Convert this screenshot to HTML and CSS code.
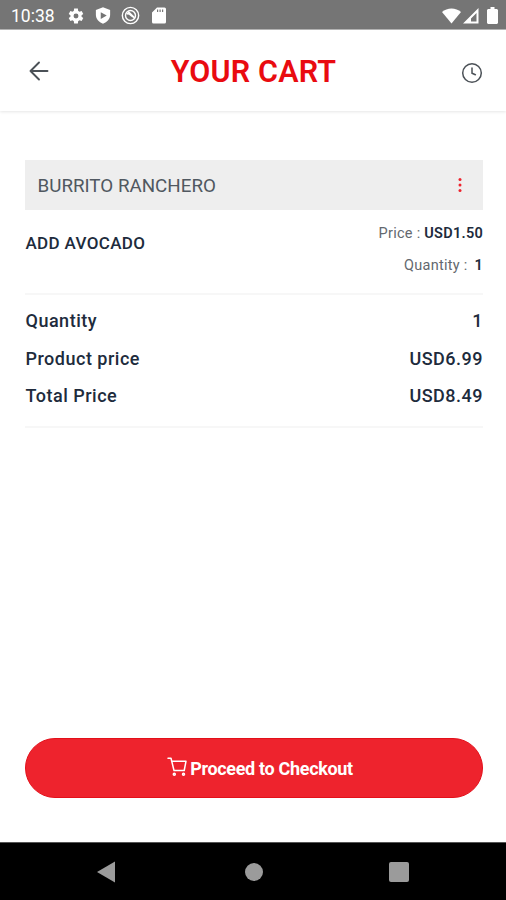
FILE: index.html
```html
<!DOCTYPE html>
<html lang="en">
<head>
<meta charset="utf-8">
<title>Your Cart</title>
<link rel="stylesheet" href="styles.css">
</head>
<body>
<div class="phone">
  <div class="status">
    <span class="time">10:38</span>
    <div class="status-left">
      <svg width="18" height="18" viewBox="0 0 24 24" fill="#fff"><path fill-rule="evenodd" d="M19.4 13a7.500 7.500 0 0 0 0-2l2.300-1.800-2.200-4-2.800 1.100a8 8 0 0 0-1.800-1L14.500 2h-5l-.5 3.300a8 8 0 0 0-1.700 1L4.500 5.200l-2.200 4L4.600 11a7.500 7.500 0 0 0 0 2l-2.300 1.800 2.200 4 2.800-1.100a8 8 0 0 0 1.700 1l.5 3.300h5l.4-3.300a8 8 0 0 0 1.800-1l2.800 1.100 2.200-4zM12 15.300a3.300 3.300 0 1 1 0-6.600 3.300 3.300 0 0 1 0 6.600z"/></svg>
      <svg width="18" height="19" viewBox="0 0 24 24" fill="#fff"><path fill-rule="evenodd" d="M12 1 2.500 4.500V11c0 5.500 4 10 9.500 12 5.500-2 9.500-6.500 9.500-12V4.500zM9 7.500l8 4.500-8 4.500z"/></svg>
      <svg width="19" height="19" viewBox="0 0 24 24" fill="none" stroke="#fff" stroke-width="1.800"><circle cx="12" cy="12" r="10.300"/><circle cx="12" cy="12" r="6.300"/><path d="M7.500 10c4-2 5 4 9 4M9 7l8 8" stroke-width="2.200"/></svg>
      <svg width="14" height="17" viewBox="0 0 14 17" fill="#fff"><path fill-rule="evenodd" d="M5 .5h7.500a1.500 1.500 0 0 1 1.500 1.500v13a1.500 1.500 0 0 1-1.500 1.500h-11A1.500 1.500 0 0 1 0 15V5.500zM5 2.500V5h1.200V2.500zm2.500 0V5h1.200V2.500zm2.500 0V5h1.200V2.500z"/></svg>
    </div>
    <div class="status-right">
      <svg width="19" height="16" viewBox="0 0 19 16" fill="#fff"><path d="M0 4C5-.8 14-.8 19 4L9.500 15.500z"/></svg>
      <svg width="16" height="16" viewBox="0 0 16 16"><path fill="#fff" fill-rule="evenodd" d="M15.500 0v15.500H0zM13.500 5 8 10.500v3h5.500z"/></svg>
      <svg width="11" height="17" viewBox="0 0 11 17" fill="#fff"><path d="M3.500 0h4v2H10l1 1v13l-1 1H1l-1-1V3l1-1h2.500z"/></svg>
    </div>
  </div>
  <header class="header">
    <svg width="20" height="20" viewBox="0 0 20 20" fill="none" stroke="#4b5157" stroke-width="1.900" stroke-linecap="round" stroke-linejoin="round"><path d="M18.500 10H1.500M10 1.500 1.500 10l8.500 8.500"/></svg>
    <h1>YOUR CART</h1>
    <svg class="clock" width="22" height="22" viewBox="0 0 22 22" fill="none" stroke="#4b5157" stroke-width="1.500" stroke-linecap="round"><circle cx="11" cy="11" r="9.300"/><path d="M11 6v5.200l3.400 1.600"/></svg>
  </header>
  <main class="cart">
    <div class="item">
      <span class="item-name">BURRITO RANCHERO</span>
      <svg width="4" height="16" viewBox="0 0 4 16" fill="#ee232d"><circle cx="2" cy="2.500" r="1.500"/><circle cx="2" cy="8" r="1.500"/><circle cx="2" cy="13.500" r="1.500"/></svg>
    </div>
    <div class="extra">
      <span class="extra-name">ADD AVOCADO</span>
      <div class="extra-info">
        <div class="price">Price : <b>USD1.50</b></div>
        <div class="qty">Quantity : <b>1</b></div>
      </div>
    </div>
    <div class="totals">
      <div class="row"><span>Quantity</span><span>1</span></div>
      <div class="row"><span>Product price</span><span>USD6.99</span></div>
      <div class="row"><span>Total Price</span><span>USD8.49</span></div>
    </div>
    <button class="checkout">
      <svg width="20" height="20" viewBox="0 0 20 20" fill="none" stroke="#fff" stroke-width="1.500" stroke-linecap="round" stroke-linejoin="round"><path d="M1 1.200h3l3 12.300h9.800M5 4.200h14l-1.800 9.300"/><circle cx="7.300" cy="17.300" r="1"/><circle cx="16.500" cy="17.300" r="1"/></svg>
      <span>Proceed to Checkout</span>
    </button>
  </main>
  <nav class="nav">
    <svg width="18" height="22" viewBox="0 0 18 22" fill="#9b9b9b"><path d="M18 .5v21L0 11z"/></svg>
    <span class="home"></span>
    <span class="recent"></span>
  </nav>
</div>
</body>
</html>
```

FILE: styles.css
```css
* { box-sizing: border-box; }
body { margin: 0; font-family: Roboto, "Liberation Sans", sans-serif; background: #fff; color: #202b3c; }
svg { display: block; flex: none; }
.phone { width: 506px; height: 900px; display: flex; flex-direction: column; overflow: hidden; }
.status { height: 30px; flex: none; display: flex; align-items: center; background: #757575; border-bottom: 1px solid #b5b5b5; padding: 2px 8px 0 11px; color: #fff; }
.time { width: 56px; font-size: 17.5px; line-height: 20px; white-space: nowrap; }
.status-left { display: flex; align-items: center; gap: 9px; }
.status-left svg:last-child { margin-left: 3px; }
.status-right { display: flex; align-items: center; margin-left: auto; }
.status-right svg:nth-child(2) { margin: 0 8px 0 2px; }
.header { height: 81px; flex: none; display: flex; align-items: center; justify-content: space-between; padding: 1px 23px 0 29px; box-shadow: 0 1px 3px rgba(0,0,0,.1); }
.header > svg:first-child { margin-bottom: 1px; }
.header .clock { margin-top: 4px; }
h1 { margin: 2px 3px 0 0; font-size: 30.5px; line-height: 36px; font-weight: 600; letter-spacing: .2px; color: #e90b10; white-space: nowrap; }
.cart { flex: 1; display: flex; flex-direction: column; padding: 49px 23px 44px 25px; }
.item { height: 50px; display: flex; align-items: center; justify-content: space-between; background: #eee; padding: 0 21px 0 12.5px; }
.item-name { font-size: 18.8px; color: #505860; padding-top: 2px; white-space: nowrap; }
.extra { height: 85px; display: flex; justify-content: space-between; border-bottom: 2px solid #f7f7f7; }
.extra-name { font-size: 17px; font-weight: 500; letter-spacing: .35px; line-height: 20px; padding: 23px 0 0 .5px; }
.extra-info { display: flex; flex-direction: column; align-items: flex-end; padding-top: 14px; font-size: 14.500px; letter-spacing: .27px; color: #63686e; }
.extra-info div { height: 32px; line-height: 20px; white-space: pre; }
.extra-info b { font-weight: 600; color: #202b3c; }
.qty b { padding: 0 0 0 3px; }
.totals { padding: 7px 0 11px; border-bottom: 2px solid #f7f7f7; font-size: 18px; font-weight: 500; letter-spacing: .5px; }
.row { height: 37.500px; display: flex; align-items: center; justify-content: space-between; padding-left: .5px; }
.checkout { margin-top: auto; height: 60px; flex: none; border: 1px solid #e3101a; border-radius: 30px; background: #ee232d; color: #fff; font: 700 18px/22px Roboto, sans-serif; letter-spacing: -.33px; display: flex; align-items: center; justify-content: center; gap: 3px; padding: 0 0 0 12px; }
.checkout span { padding-top: 2px; }
.checkout svg { margin-bottom: 2px; }
.nav { height: 58px; flex: none; background: #000; border-top: 1px solid #555; display: flex; align-items: center; justify-content: space-between; padding: 0 97px; }
.home { width: 18px; height: 18px; border-radius: 50%; background: #9b9b9b; margin-left: 3px; }
.recent { width: 20px; height: 20px; border-radius: 2px; background: #9b9b9b; }
```
